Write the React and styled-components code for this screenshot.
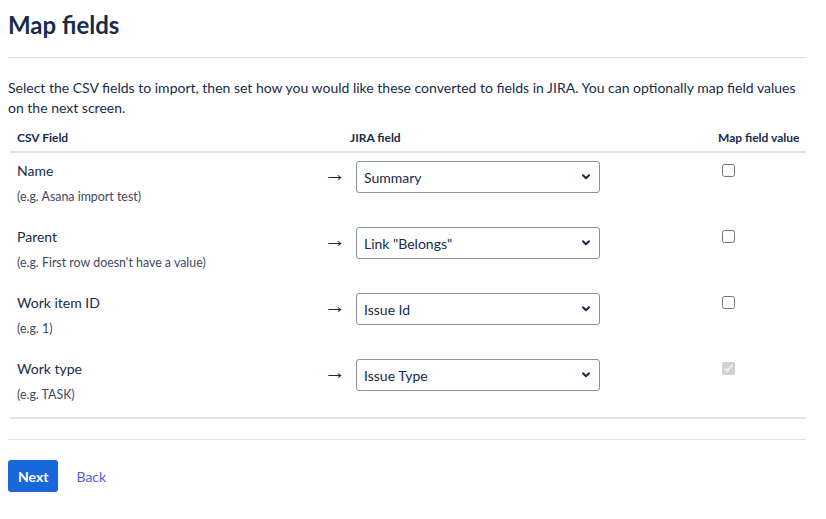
import React from "react";
import styled, { createGlobalStyle } from "styled-components";

const Global = createGlobalStyle`
  html, body { margin: 0; padding: 0; background: #fff; }
  body {
    font-family: Lato, "Noto Sans", sans-serif;
    color: #172b4d;
    font-size: 14px;
    line-height: 20px;
  }
  * { box-sizing: border-box; }
`;

const Page = styled.main`
  width: 826px;
  padding: 0 20px 0 8px;
`;

const Title = styled.h1`
  margin: 0;
  padding-top: 11px;
  font-size: 24px;
  line-height: 28px;
  font-weight: 700;
  color: #172b4d;
  height: 57px;
`;

const Rule = styled.hr`
  margin: 0;
  border: 0;
  border-top: 1px solid #dfe1e6;
  height: 0;
`;

const Description = styled.p`
  margin: 20px 0 10px;
  font-size: 14px;
  line-height: 20px;
`;

const Table = styled.div`
  margin-left: 2px;
  display: grid;
  grid-template-columns: 310px 30px 361px 95px;
  border-bottom: 2px solid #dfe1e6;
`;

const HeadCell = styled.div`
  font-size: 12px;
  font-weight: 700;
  line-height: 20px;
  white-space: nowrap;
  padding: 0 ${(p) => (p.$pad ?? 7)}px 3px;
  border-bottom: 2px solid #dfe1e6;
`;

const Cell = styled.div`
  padding: 8px 7px 14px;
  min-height: 66px;
`;

const ArrowCell = styled.div`
  padding-top: 11px;
  text-align: center;
  font-family: "Liberation Sans", "DejaVu Sans", sans-serif;
  font-size: 22px;
  line-height: 20px;
`;

const FieldName = styled.div`
  font-size: 14px;
  line-height: 20px;
`;

const Example = styled.div`
  margin-top: 8px;
  font-size: 12.4px;
  line-height: 16px;
  color: #3b4a63;
`;

const SelectWrap = styled.div`
  position: relative;
  margin: 8px 0 0 6px;
  width: 244px;
  height: 32px;
`;

const Select = styled.select`
  appearance: none;
  width: 100%;
  height: 100%;
  border: 1px solid #8590a2;
  border-radius: 3px;
  background: #fff;
  padding: 0 24px 0 7px;
  font-family: inherit;
  font-size: 14px;
  color: #172b4d;
`;

const Chevron = styled.svg`
  position: absolute;
  right: 10px;
  top: 13px;
  pointer-events: none;
`;

const CheckCell = styled.div`
  padding-top: 0;
`;

const Check = styled.input`
  margin: 11px 3px 3px 11px;
  width: 13px;
  height: 13px;
`;

const Footer = styled.div`
  margin-top: 20px;
  border-top: 1px solid #dfe1e6;
  padding-top: 20px;
  display: flex;
  align-items: center;
  gap: 8px;
`;

const PrimaryButton = styled.button`
  height: 32px;
  padding: 0 10px;
  border: 0;
  border-radius: 3px;
  background: #1868db;
  color: #fff;
  font-family: inherit;
  font-size: 14px;
  font-weight: 700;
  cursor: pointer;
`;

const LinkButton = styled.button`
  height: 32px;
  padding: 0 10px;
  border: 0;
  background: none;
  color: #4f5fdb;
  font-family: inherit;
  font-size: 14px;
  cursor: pointer;
`;

const rows = [
  { name: "Name", example: "(e.g. Asana import test)", value: "Summary" },
  { name: "Parent", example: "(e.g. First row doesn't have a value)", value: 'Link "Belongs"' },
  { name: "Work item ID", example: "(e.g. 1)", value: "Issue Id" },
  { name: "Work type", example: "(e.g. TASK)", value: "Issue Type", locked: true },
];

export default function App() {
  return (
    <Page>
      <Global />
      <Title>Map fields</Title>
      <Rule />
      <Description>
        Select the CSV fields to import, then set how you would like these converted to fields in JIRA. You can optionally map field values on the next screen.
      </Description>
      <Table>
        <HeadCell>CSV Field</HeadCell>
        <HeadCell $pad={0} />
        <HeadCell $pad={0}>JIRA field</HeadCell>
        <HeadCell>Map field value</HeadCell>
        {rows.map((r) => (
          <React.Fragment key={r.name}>
            <Cell>
              <FieldName>{r.name}</FieldName>
              <Example>{r.example}</Example>
            </Cell>
            <ArrowCell>→</ArrowCell>
            <div>
              <SelectWrap>
                <Select defaultValue={r.value}>
                  <option>{r.value}</option>
                </Select>
                <Chevron width="8" height="6" viewBox="0 0 8 6">
                  <path d="M1 1.2 L4 4.2 L7 1.2" fill="none" stroke="#172b4d" strokeWidth="2" strokeLinecap="round" strokeLinejoin="round" />
                </Chevron>
              </SelectWrap>
            </div>
            <CheckCell>
              {r.locked ? <Check type="checkbox" checked disabled readOnly /> : <Check type="checkbox" />}
            </CheckCell>
          </React.Fragment>
        ))}
      </Table>
      <Footer>
        <PrimaryButton>Next</PrimaryButton>
        <LinkButton>Back</LinkButton>
      </Footer>
    </Page>
  );
}
